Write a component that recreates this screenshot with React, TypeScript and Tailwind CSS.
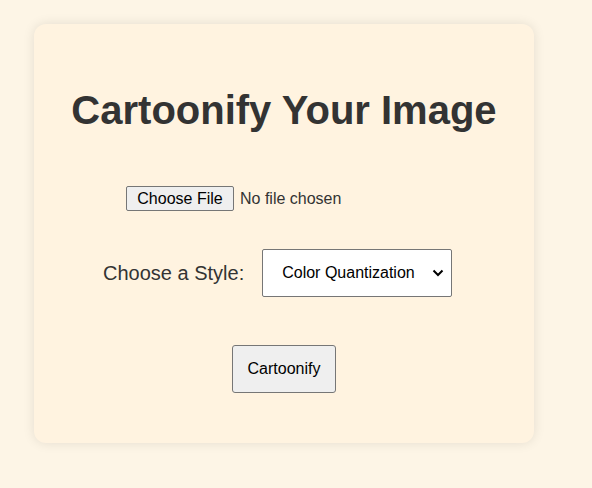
import React from 'react';

export default function App() {
  return (
    <div className="min-h-[488px] w-full bg-[#fdf5e6] pt-6 pl-[34px] font-['Liberation_Sans',Arial,sans-serif]">
      <div className="flex h-[419px] w-[500px] flex-col rounded-xl bg-[#fff3e0] shadow-[0_0_12px_rgba(0,0,0,0.1)]">
        {/* Title */}
        <h1 className="mt-[63px] text-center text-[40px] font-bold leading-[46px] text-[#333]">
          Cartoonify Your Image
        </h1>

        {/* File picker */}
        <div className="mt-[53px] flex items-center pl-[92px]">
          <span className="flex h-[25px] w-[108px] items-center justify-center rounded-[2px] border border-[#767676] bg-[#efefef] text-[16px] text-black">
            Choose File
          </span>
          <span className="ml-[6px] text-[16px] text-[#333]">No file chosen</span>
        </div>

        {/* Style select */}
        <div className="mt-[38px] flex items-center pl-[69px]">
          <label className="text-[20px] text-[#333]">Choose a Style:</label>
          <div className="relative ml-[18px] flex h-[48px] w-[190px] items-center rounded-[2px] border border-[#767676] bg-white pl-[19px] text-[16px] text-black">
            Color Quantization
            <svg
              className="absolute right-[7px] top-[18px]"
              width="12"
              height="10"
              viewBox="0 0 12 10"
              fill="none"
            >
              <path d="M1.5 2.5 L6 7 L10.5 2.5" stroke="black" strokeWidth="2" />
            </svg>
          </div>
        </div>

        {/* Submit */}
        <div className="mt-[48px] flex pl-[198px]">
          <button className="h-[48px] w-[104px] rounded-[3px] border border-[#767676] bg-[#efefef] text-[16px] text-black">
            Cartoonify
          </button>
        </div>
      </div>
    </div>
  );
}
